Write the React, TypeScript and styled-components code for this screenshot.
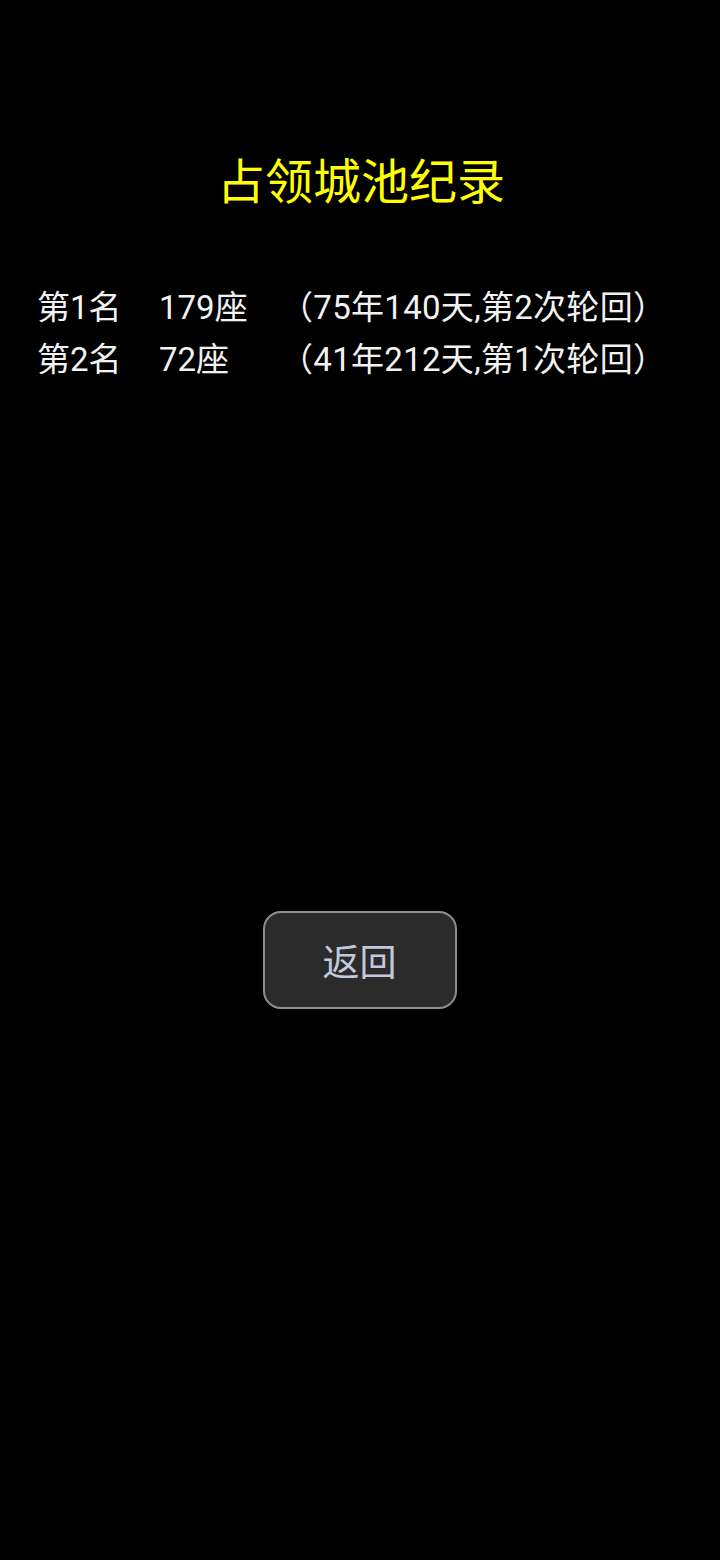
import React from "react";
import styled, { createGlobalStyle } from "styled-components";

const Global = createGlobalStyle`
  html, body { margin: 0; padding: 0; background: #000; }
  body { font-family: Roboto, "Noto Sans CJK SC", sans-serif; }
`;

const Page = styled.div`
  width: 720px;
  min-height: 1560px;
  background: #000;
  display: flex;
  flex-direction: column;
  align-items: stretch;
  padding-top: 153px;
  box-sizing: border-box;
`;

const Title = styled.h1`
  margin: 0;
  text-align: center;
  color: #ffff00;
  font-size: 48px;
  line-height: 60px;
  font-weight: 400;
  padding-left: 2px;
`;

const List = styled.div`
  margin-top: 66px;
  padding-left: 37px;
  display: flex;
  flex-direction: column;
`;

const Row = styled.div`
  display: grid;
  grid-template-columns: 122px 121px auto;
  height: 52px;
  align-items: center;
  color: #f2f2f2;
  font-size: 33px;
  white-space: nowrap;
`;

const Cell = styled.span``;

const Detail = styled.span`
  letter-spacing: 0.3px;
`;

const ButtonWrap = styled.div`
  margin-top: 528px;
  display: flex;
  justify-content: center;
  padding-right: 1px;
`;

const BackButton = styled.button`
  width: 194px;
  height: 98px;
  border-radius: 18px;
  background: #2b2b2b;
  border: 2px solid #8e8e92;
  color: #c3c9dc;
  font-family: Roboto, "Noto Sans CJK SC", sans-serif;
  font-size: 37px;
  padding: 0;
  cursor: pointer;
`;

const records = [
  { rank: "第1名", count: "179座", detail: "（75年140天,第2次轮回）" },
  { rank: "第2名", count: "72座", detail: "（41年212天,第1次轮回）" },
];

export default function App() {
  return (
    <>
      <Global />
      <Page>
        <Title>占领城池纪录</Title>
        <List>
          {records.map((r) => (
            <Row key={r.rank}>
              <Cell>{r.rank}</Cell>
              <Cell>{r.count}</Cell>
              <Detail>{r.detail}</Detail>
            </Row>
          ))}
        </List>
        <ButtonWrap>
          <BackButton>返回</BackButton>
        </ButtonWrap>
      </Page>
    </>
  );
}
